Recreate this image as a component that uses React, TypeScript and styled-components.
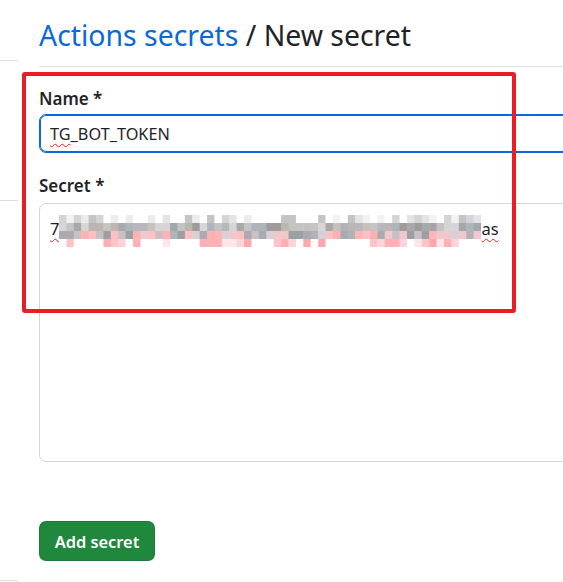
import React from "react";
import styled, { createGlobalStyle } from "styled-components";

const GlobalStyle = createGlobalStyle`
  html, body {
    margin: 0;
    padding: 0;
    background: #ffffff;
  }
  body {
    font-family: "Noto Sans", "Open Sans", "Liberation Sans", sans-serif;
    color: #1f2328;
  }
`;

const Page = styled.div`
  position: relative;
  width: 563px;
  height: 582px;
  overflow: hidden;
  display: grid;
  grid-template-columns: 18px 700px;
  column-gap: 21px;
  background: #fff;
`;

const Sidebar = styled.nav`
  display: flex;
  flex-direction: column;
`;

const SideSection = styled.div<{ $h: number }>`
  height: ${(p) => p.$h}px;
  flex: none;
  border-bottom: 1px solid #d8dee4;
`;

const Main = styled.main`
  display: flex;
  flex-direction: column;
  align-items: flex-start;
`;

const Subhead = styled.div`
  align-self: stretch;
  padding: 16px 0 12px;
  border-bottom: 1px solid #d8dee4;
`;

const Title = styled.h2`
  margin: 0;
  font-size: 28.4px;
  line-height: 38px;
  font-weight: 400;
  color: #1f2328;
  white-space: nowrap;
`;

const Crumb = styled.a`
  color: #0969da;
  text-decoration: none;
`;

const Label = styled.label<{ $top: number }>`
  display: block;
  margin-top: ${(p) => p.$top}px;
  margin-bottom: ${(p) => (p.$top > 21 ? 6 : 4)}px;
  font-size: 17px;
  line-height: 22px;
  font-weight: 600;
  color: #1f2328;
`;

const TextInput = styled.div`
  box-sizing: border-box;
  align-self: stretch;
  height: 39px;
  display: flex;
  align-items: center;
  padding: 0 10px;
  border: 1px solid #0969da;
  box-shadow: inset 0 0 0 1px #0969da;
  border-radius: 7px;
  font-size: 16.3px;
  color: #1f2328;
  white-space: nowrap;
`;

const Misspelled = styled.span`
  text-decoration: underline wavy #e5231f;
  text-decoration-thickness: 1px;
  text-underline-offset: 3px;
`;

const TextArea = styled.div`
  box-sizing: border-box;
  align-self: stretch;
  height: 259px;
  padding: 12px 10px;
  border: 1px solid #d0d7de;
  border-radius: 7px;
  font-size: 16.5px;
  line-height: 26px;
  color: #1f2328;
  display: flex;
  align-items: flex-start;
  white-space: nowrap;
`;

const Mosaic = styled.svg`
  display: block;
  flex: none;
  margin-top: -1px;
`;

const Button = styled.button`
  margin-top: 59px;
  box-sizing: border-box;
  height: 40px;
  width: 116px;
  padding: 0;
  border: 1px solid rgba(31, 35, 40, 0.15);
  border-radius: 7px;
  background: #1f883d;
  color: #ffffff;
  font-family: inherit;
  font-size: 16.4px;
  font-weight: 600;
  cursor: pointer;
`;

const Annotation = styled.div`
  position: absolute;
  left: 22px;
  top: 72px;
  width: 494px;
  height: 241px;
  box-sizing: border-box;
  border: 4px solid #ec1c24;
  border-radius: 3px;
  pointer-events: none;
`;

const grays = ["#a9a9a9", "#b5b9bd", "#c4c4c4", "#9e9c9a", "#bdb6b0", "#d6d6d6", "#aeb4ba", "#c9c2bc", "#a3a7ab"];
const lights = ["#ffffff", "#ffffff", "#f2f2f2", "#e4e4e4", "#d2d4d8", "#c4c4c4", "#ffffff", "#ececec"];
const mids = ["#ffb4b8", "#d8d0d4", "#a8acb0", "#ffb0b0", "#c8c0c4", "#f0c8cc", "#b0b4b8", "#ffc0c4", "#9ca0a4"];
const pinks = ["#ffffff", "#ffb0b4", "#ffd4d8", "#ffffff", "#ffe6e8", "#ffa8ac", "#ffffff", "#ffc4c8"];

function rng(seed: number) {
  let s = seed;
  return () => {
    s = (s * 1103515245 + 12345) & 0x7fffffff;
    return s / 0x7fffffff;
  };
}

const MosaicBlock: React.FC = () => {
  const cols = 57;
  const cw = 422 / cols;
  const rows = [lights, grays, mids, pinks];
  const r = rng(7);
  const rects: React.ReactNode[] = [];
  rows.forEach((pal, ri) => {
    for (let c = 0; c < cols; c++) {
      const col = pal[Math.floor(r() * pal.length)];
      rects.push(
        <rect key={`${ri}-${c}`} x={c * cw} y={ri * 8} width={cw + 0.5} height={8.5} fill={col} />
      );
    }
  });
  return (
    <Mosaic width={422} height={32} viewBox="0 0 422 32">
      {rects}
    </Mosaic>
  );
};

export default function App() {
  return (
    <>
      <GlobalStyle />
      <Page>
        <Sidebar>
          <SideSection $h={60} />
          <SideSection $h={139} />
          <SideSection $h={379} />
        </Sidebar>
        <Main>
          <Subhead>
            <Title>
              <Crumb href="#">Actions secrets</Crumb> / New secret
            </Title>
          </Subhead>
          <Label $top={21}>Name *</Label>
          <TextInput>
            <Misspelled>TG</Misspelled>_BOT_TOKEN
          </TextInput>
          <Label $top={22}>Secret *</Label>
          <TextArea>
            <Misspelled>7</Misspelled>
            <MosaicBlock />
            <Misspelled>as</Misspelled>
          </TextArea>
          <Button type="button">Add secret</Button>
        </Main>
        <Annotation />
      </Page>
    </>
  );
}
